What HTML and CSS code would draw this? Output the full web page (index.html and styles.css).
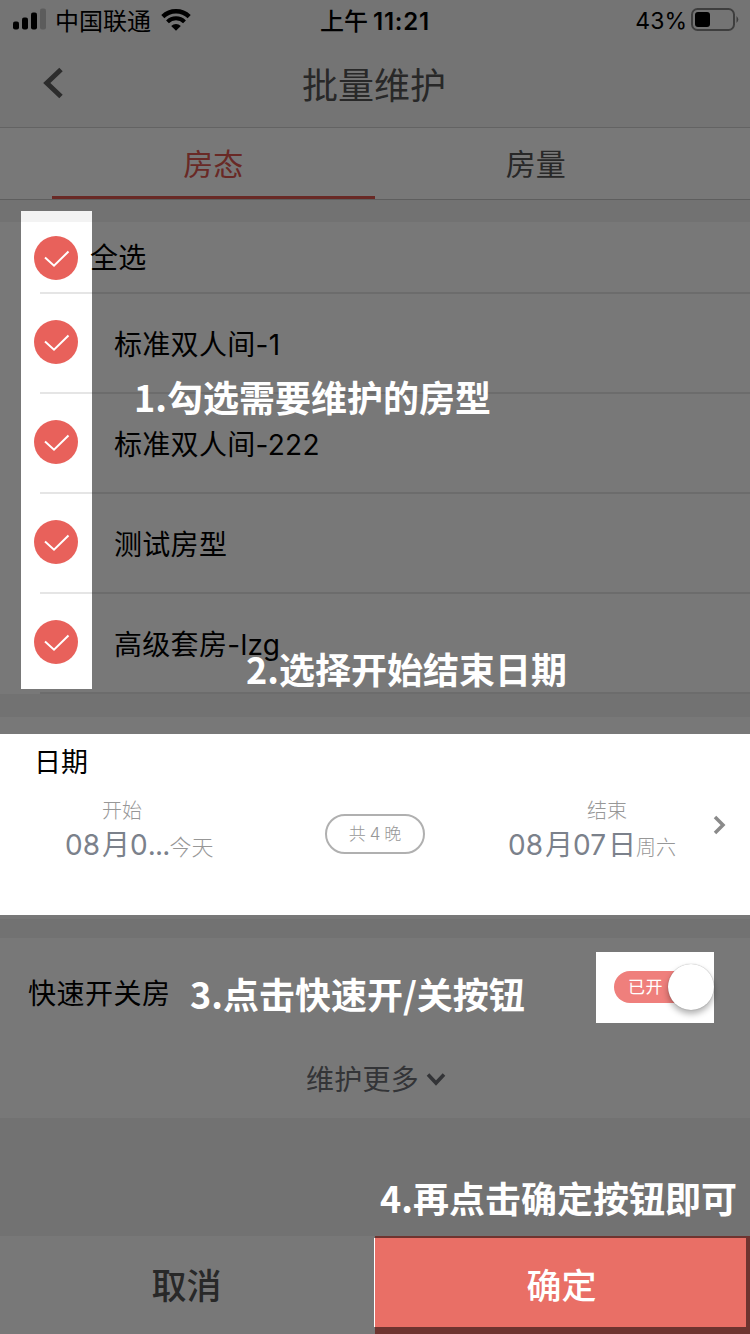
FILE: index.html
```
<!DOCTYPE html>
<html lang="zh-CN">
<head>
<meta charset="utf-8">
<title>批量维护</title>
<link rel="stylesheet" href="styles.css">
</head>
<body>
<svg class="defs" width="0" height="0">
  <symbol id="check" viewBox="0 0 44 44">
    <circle cx="22" cy="22" r="22" fill="#e8615b"/>
    <path d="M11 21.6 20 29.7 34.5 15.5" fill="none" stroke="#fff" stroke-width="2"/>
  </symbol>
</svg>
<div class="screen">
  <header class="header">
    <div class="status">
      <div class="status-left">
        <svg class="signal" width="34" height="22" viewBox="0 0 34 22">
          <rect x="0" y="13.5" width="6" height="8" rx="2"/>
          <rect x="9" y="9.5" width="6" height="12" rx="2"/>
          <rect x="18" y="4.5" width="6" height="17" rx="2"/>
          <rect x="27" y="0.5" width="6" height="21" rx="2" fill="#c4c4c4"/>
        </svg>
        <span class="carrier">中国联通</span>
        <svg class="wifi" width="30" height="22" viewBox="0 0 30 22">
          <path d="M1.8 7.6A19 19 0 0 1 28.2 7.6" fill="none" stroke="#000" stroke-width="4.4"/>
          <path d="M6.5 12.9A12 12 0 0 1 23.5 12.9" fill="none" stroke="#000" stroke-width="4"/>
          <path d="M15 21.8 10.2 17A7 7 0 0 1 19.8 17Z"/>
        </svg>
      </div>
      <div class="status-time"><span>上午</span><b>11:21</b></div>
      <div class="status-right">
        <span>43%</span>
        <svg width="48" height="24" viewBox="0 0 48 24">
          <rect x="1" y="1" width="42" height="21" rx="5.5" fill="none" stroke="#858585" stroke-width="2"/>
          <rect x="4" y="4" width="15" height="15" rx="3"/>
          <path d="M45.5 8q3.6 3.5 0 7z" fill="#858585"/>
        </svg>
      </div>
    </div>
    <div class="titlebar">
      <svg class="back" width="22" height="32" viewBox="0 0 22 32"><path d="M19 2.5 4.8 16 19 29.5" fill="none" stroke="#5e5e5e" stroke-width="5"/></svg>
      <h1>批量维护</h1>
    </div>
  </header>
  <nav class="tabs">
    <span class="tab active">房态</span>
    <span class="tab">房量</span>
  </nav>
  <main>
    <section class="rooms">
      <div class="room all"><svg class="check"><use href="#check"/></svg><span>全选</span></div>
      <div class="room"><svg class="check"><use href="#check"/></svg><span>标准双人间-1</span></div>
      <div class="room"><svg class="check"><use href="#check"/></svg><span>标准双人间-222</span></div>
      <div class="room"><svg class="check"><use href="#check"/></svg><span>测试房型</span></div>
      <div class="room"><svg class="check"><use href="#check"/></svg><span>高级套房-lzg</span></div>
    </section>
    <section class="dates">
      <h2>日期</h2>
      <div class="range">
        <div class="day start">
          <div class="label">开始</div>
          <div class="value"><span class="date">08<i>月</i>0<span class="dots">...</span></span><small class="today">今天</small></div>
        </div>
        <div class="nights">共<em>4</em>晚</div>
        <div class="day end">
          <div class="label">结束</div>
          <div class="value"><span class="date">08<i>月</i>07<i>日</i></span><small>周六</small></div>
        </div>
        <svg class="more-arrow" width="14" height="20" viewBox="0 0 14 20"><path d="M2 2 10 10 2 18" fill="none" stroke="#8a8a8a" stroke-width="3.5"/></svg>
      </div>
    </section>
    <section class="quick">
      <div class="quick-row">
        <span>快速开关房</span>
        <div class="switch"><span>已开</span><i class="knob"></i></div>
      </div>
      <div class="expand"><span>维护更多</span><svg width="20" height="14" viewBox="0 0 20 14"><path d="M2 2.5 10 11 18 2.5" fill="none" stroke="#6e7075" stroke-width="3.6"/></svg></div>
    </section>
  </main>
  <footer class="actions">
    <div class="cancel">取消</div>
    <div class="confirm">确定</div>
  </footer>

  <div class="guide">
    <svg class="scrim" width="750" height="1334" viewBox="0 0 750 1334">
      <path fill-rule="evenodd" fill="#000" fill-opacity=".53" d="M0 0H750V1334H0ZM21 211H92V689H21ZM0 734H750V915H0ZM596 952H714V1023H596ZM374 1238H746V1327H374Z"/>
    </svg>
    <p class="tip tip-rooms">1.勾选需要维护的房型</p>
    <p class="tip tip-dates">2.选择开始结束日期</p>
    <p class="tip tip-switch">3.点击快速开/关按钮</p>
    <p class="tip tip-confirm">4.再点击确定按钮即可</p>
  </div>
</div>
</body>
</html>
```
FILE: styles.css
```
* { box-sizing: border-box; }
body {
  margin: 0;
  font-family: Inter, "Noto Sans CJK SC", sans-serif;
  color: #000;
}
h1, h2, p { margin: 0; font-weight: 400; }
i, em { font-style: normal; }
svg { display: block; flex: none; }
.defs { position: absolute; }

.screen {
  position: relative;
  display: flex;
  flex-direction: column;
  width: 750px;
  height: 1334px;
  overflow: hidden;
  background: #f3f3f3;
}

/* Header */
.header { height: 128px; background: #f7f7f7; border-bottom: 1px solid #d2d2d2; }
.status {
  display: grid;
  grid-template-columns: 1fr auto 1fr;
  align-items: center;
  height: 40px;
  padding: 0 11px 0 13px;
  font-size: 24px;
  line-height: 37px;
}
.status-left, .status-right, .status-time { display: flex; align-items: center; }
.status span, .status b { padding-top: 3px; }
.carrier { margin: 0 10px 0 8px; }
.signal { margin-top: -2px; }
.status-time { gap: 5px; margin-right: 2px; font-weight: 500; }
.status-time b { font-weight: 600; letter-spacing: .8px; }
.status-right { justify-content: flex-end; gap: 4px; font-size: 23px; }
.titlebar {
  display: grid;
  grid-template-columns: 1fr auto 1fr;
  align-items: center;
  height: 87px;
}
.titlebar h1 { padding: 5px 2px 0 0; color: #555; font-size: 36px; line-height: 82px; }
.back { margin: -1px 0 0 42px; }

/* Tabs */
.tabs {
  display: flex;
  flex: none;
  height: 72px;
  padding: 0 53px 0 52px;
  background: #fff;
  border-bottom: 1px solid #c8c8c8;
}
.tab {
  flex: 1;
  color: #555;
  font-size: 30px;
  line-height: 72px;
  text-align: center;
}
.tab.active { color: #e0574f; border-bottom: 3px solid #e0574f; }

/* Room list */
.rooms { margin-top: 22px; background: #fff; }
.room {
  display: flex;
  align-items: center;
  height: 100px;
  padding-left: 34px;
  background: linear-gradient(#e5e5e5, #e5e5e5) 40px 98px / 710px 2px no-repeat;
  font-size: 28px;
  letter-spacing: .3px;
}
.room.all { height: 72px; background-position: 40px 70px; }
.check { width: 44px; height: 44px; margin-top: -4px; }
.room span { margin: 0 0 3px 36px; }
.all .check { margin-top: 0; }
.all span { margin: 0 0 4px 12px; }

/* Dates */
.dates { height: 202px; margin-top: 23px; padding: 25px 23px 0 34px; background: #fff; }
.dates h2 { font-size: 27px; line-height: 42px; }
.range { display: flex; height: 72px; margin-top: 15px; padding-left: 1px; }
.day { color: #979797; }
.start { width: 175px; padding-left: 30px; }
.label { width: 114px; font-size: 20px; font-weight: 300; line-height: 24px; text-align: center; }
.value { display: flex; align-items: baseline; height: 44px; line-height: 44px; white-space: nowrap; }
.date { color: #7b818b; font-size: 28px; font-weight: 400; }
.date i { margin-left: 2px; }
.dots { letter-spacing: -.8px; }
.value small { font-size: 20px; font-weight: 300; }
.value .today { font-size: 22px; }
.nights {
  width: 100px;
  height: 40px;
  margin: 15px 83px 0 115px;
  border: 2px solid #b0b0b0;
  border-radius: 20px;
  color: #979797;
  font-size: 17px;
  font-weight: 300;
  line-height: 36px;
  text-align: center;
}
.nights em { margin: 0 4px; }
.end { width: 168px; }
.end .label { width: 198px; }
.more-arrow { margin: 16px 0 0 37px; }

/* Quick switch */
.quick { height: 180px; margin-top: 19px; background: #fff; }
.quick-row {
  display: flex;
  align-items: center;
  justify-content: space-between;
  height: 110px;
  padding: 0 40px 2px 28px;
  font-size: 28px;
  letter-spacing: .5px;
}
.switch {
  display: flex;
  align-items: center;
  width: 96px;
  height: 32px;
  margin-top: -10px;
  padding-left: 14px;
  border-radius: 16px;
  background: #ef7f7c;
  color: #fff;
  font-size: 17px;
  line-height: 30px;
  letter-spacing: .6px;
  white-space: nowrap;
}
.switch span { flex: none; }
.knob {
  flex: none;
  width: 46px;
  height: 46px;
  margin-left: 5px;
  border-radius: 50%;
  background: #fff;
  box-shadow: 0 4px 6px rgba(0, 0, 0, .3), 0 0 1px rgba(0, 0, 0, .4);
}
.expand {
  display: flex;
  align-items: center;
  justify-content: center;
  gap: 7px;
  height: 60px;
  padding-left: 2px;
  color: #6e7075;
  font-size: 28px;
  letter-spacing: .3px;
}
.expand svg { margin-top: 2px; }

/* Footer */
.actions { display: flex; height: 98px; margin-top: auto; font-size: 35px; font-weight: 500; line-height: 100px; text-align: center; }
.cancel { flex: 1; padding-right: 2px; background: #fff; color: #555; }
.confirm { flex: 1; padding-right: 2px; background: #e96f66; color: #fff; }

/* Guide overlay */
.guide { position: absolute; inset: 0; }
.tip {
  position: absolute;
  color: #fff;
  font-family: "Noto Sans CJK SC", sans-serif;
  font-size: 36px;
  font-weight: 700;
  line-height: 52px;
  white-space: nowrap;
}
.tip-rooms { left: 134px; top: 370px; }
.tip-dates { left: 246px; top: 642px; }
.tip-switch { left: 190px; top: 967px; }
.tip-confirm { left: 380px; top: 1171px; }
```
